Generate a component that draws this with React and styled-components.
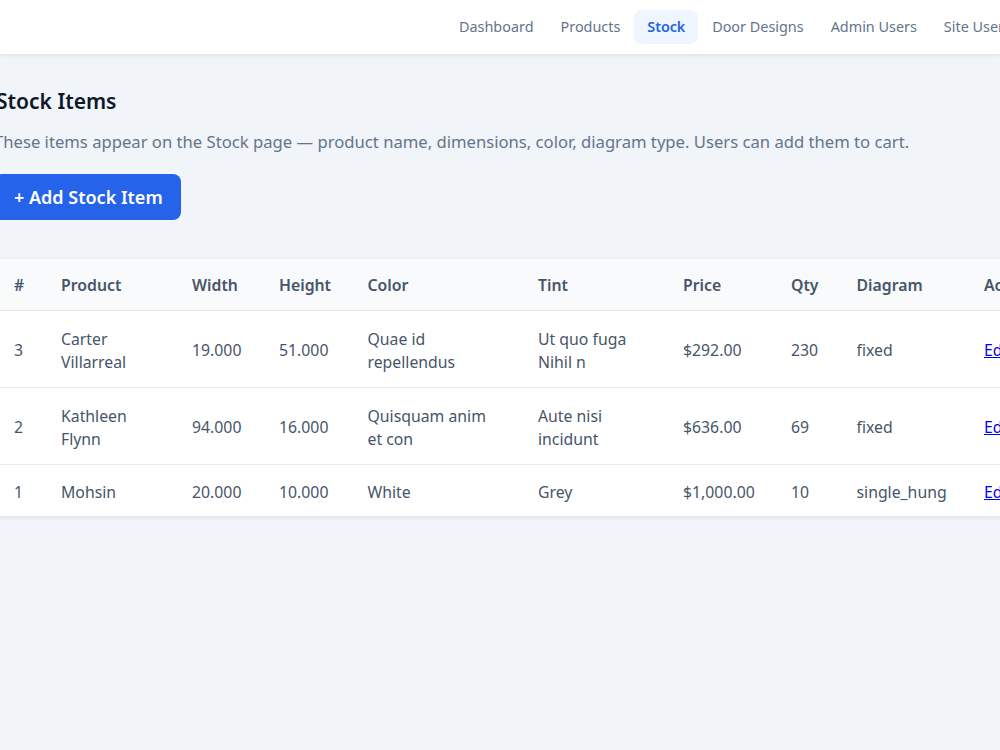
import React from "react";
import styled, { createGlobalStyle } from "styled-components";

const Global = createGlobalStyle`
  html, body { margin: 0; padding: 0; background: #f1f4f9; }
  body { font-family: "Noto Sans", "Open Sans", sans-serif; overflow: hidden; }
  #root { width: 1000px; height: 750px; overflow: hidden; }
`;

const TopBar = styled.header`
  height: 54px;
  width: 1000px;
  background: #fff;
  box-shadow: 0 1px 4px rgba(15, 23, 42, 0.1);
  display: flex;
  align-items: center;
  overflow: hidden;
`;

const Nav = styled.nav`
  display: flex;
  align-items: center;
  gap: 1px;
  margin-left: 446px;
  flex-shrink: 0;
`;

const NavLink = styled.a`
  padding: 0 13px;
  height: 34px;
  line-height: 34px;
  border-radius: 8px;
  font-size: 14.4px;
  white-space: nowrap;
  color: ${(p) => (p.$active ? "#2563eb" : "#64748b")};
  background: ${(p) => (p.$active ? "#eff6ff" : "transparent")};
  font-weight: ${(p) => (p.$active ? 600 : 400)};
  letter-spacing: ${(p) => (p.$active ? "-0.1px" : "0")};
`;

const Main = styled.main`
  margin-left: -6px;
  width: 1100px;
  padding-top: 32px;
`;

const Title = styled.h1`
  margin: 0 0 0 2px;
  font-size: 21px;
  line-height: 30px;
  font-weight: 600;
  color: #0f172a;
`;

const Lead = styled.p`
  margin: 14px 0 0 0;
  font-size: 16.65px;
  line-height: 24px;
  color: #64748b;
`;

const AddButton = styled.button`
  display: block;
  margin-top: 20px;
  height: 46px;
  width: 187px;
  padding: 0 0 0 20px;
  text-align: left;
  border: 0;
  border-radius: 8px;
  background: #2563eb;
  color: #fff;
  font-family: inherit;
  font-size: 18px;
  font-weight: 600;
`;

const Card = styled.div`
  margin-top: 39px;
  width: 1100px;
  background: #fff;
  border-radius: 8px;
  overflow: hidden;
  box-shadow: 0 1px 5px rgba(15, 23, 42, 0.09);
`;

const Table = styled.table`
  width: 1100px;
  table-layout: fixed;
  border-collapse: collapse;
  font-size: 15.8px;
  line-height: 23px;
`;

const HeadRow = styled.tr`
  height: 51px;
  background: #f8fafc;
  border-bottom: 1px solid #e2e8f0;
`;

const Th = styled.th`
  padding: 2px 20px 0;
  text-align: left;
  font-weight: 600;
  color: #475569;
`;

const Row = styled.tr`
  height: ${(p) => (p.$short ? "52px" : "77px")};
  border-bottom: ${(p) => (p.$short ? "0" : "1px solid #e8ebf0")};
`;

const Td = styled.td`
  padding: 4px 20px 0;
  color: #475569;
  vertical-align: middle;
`;

const EditLink = styled.a`
  color: #0000ee;
  text-decoration: underline;
`;

const widths = [47, 131, 87, 88.5, 170.5, 145, 108, 65.5, 127.5, 130];
const heads = ["#", "Product", "Width", "Height", "Color", "Tint", "Price", "Qty", "Diagram", "Actions"];
const rows = [
  ["3", "Carter Villarreal", "19.000", "51.000", "Quae id repellendus", "Ut quo fuga Nihil n", "$292.00", "230", "fixed"],
  ["2", "Kathleen Flynn", "94.000", "16.000", "Quisquam anim et con", "Aute nisi incidunt", "$636.00", "69", "fixed"],
  ["1", "Mohsin", "20.000", "10.000", "White", "Grey", "$1,000.00", "10", "single_hung"],
];
const links = ["Dashboard", "Products", "Stock", "Door Designs", "Admin Users", "Site Users"];

export default function App() {
  return (
    <>
      <Global />
      <TopBar>
        <Nav>
          {links.map((l) => (
            <NavLink key={l} $active={l === "Stock"}>{l}</NavLink>
          ))}
        </Nav>
      </TopBar>
      <Main>
        <Title>Stock Items</Title>
        <Lead>These items appear on the Stock page — product name, dimensions, color, diagram type. Users can add them to cart.</Lead>
        <AddButton>+ Add Stock Item</AddButton>
        <Card>
          <Table>
            <colgroup>
              {widths.map((w, i) => <col key={i} style={{ width: w }} />)}
            </colgroup>
            <thead>
              <HeadRow>
                {heads.map((h) => <Th key={h}>{h}</Th>)}
              </HeadRow>
            </thead>
            <tbody>
              {rows.map((r, i) => (
                <Row key={r[0]} $short={i === 2}>
                  {r.map((c, j) => <Td key={j}>{c}</Td>)}
                  <Td><EditLink href="#">Edit</EditLink></Td>
                </Row>
              ))}
            </tbody>
          </Table>
        </Card>
      </Main>
    </>
  );
}
